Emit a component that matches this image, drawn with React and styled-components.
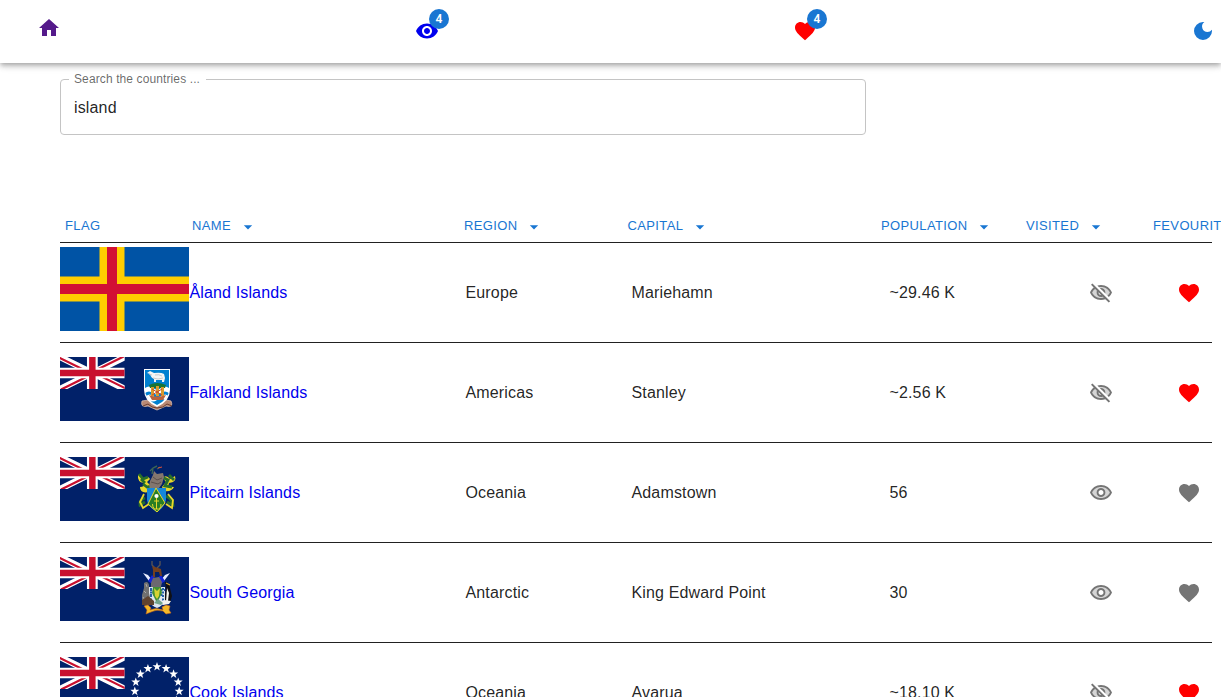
import React from 'react';
import styled, { createGlobalStyle } from 'styled-components';
import { MdHome, MdVisibility, MdFavorite, MdDarkMode, MdArrowDropDown } from 'react-icons/md';

const GlobalStyle = createGlobalStyle`
  *, *::before, *::after { box-sizing: border-box; }
  html, body { margin: 0; height: 100%; overflow: hidden; }
  body {
    background: #fff;
    color: rgba(0, 0, 0, 0.87);
    font: 400 16px/24px "Liberation Sans", Arial, sans-serif;
    letter-spacing: 0.15px;
  }
`;

const Page = styled.div`
  height: 100vh;
  overflow: hidden;
`;

const AppBar = styled.header`
  display: grid;
  grid-template-columns: 378px 378px 398px 24px;
  height: 63px;
  padding: 0 6px 0 37px;
  position: relative;
  background: #fff;
  box-shadow: 0 2px 4px -1px rgba(0, 0, 0, 0.2), 0 4px 5px 0 rgba(0, 0, 0, 0.14),
    0 1px 10px 0 rgba(0, 0, 0, 0.12);
`;

const NavItem = styled.a`
  position: relative;
  width: 24px;
  height: 24px;
  margin-top: ${(p) => p.$top || 19}px;
  color: ${(p) => p.$color};
  font-size: 24px;
  svg { display: block; }
`;

const Badge = styled.span`
  position: absolute;
  top: -10px;
  right: -10px;
  width: 20px;
  height: 20px;
  border-radius: 10px;
  background: #1976d2;
  color: #fff;
  font: 500 12px/20px Roboto, "Liberation Sans", sans-serif;
  font-weight: 600;
  letter-spacing: 0;
  text-align: center;
`;

const Main = styled.main`
  padding: 11px 9px 0 60px;
`;

const SearchField = styled.fieldset`
  width: 806px;
  height: 61px;
  margin: 0;
  padding: 0 8px;
  min-width: 0;
  border: 1px solid #c4c4c4;
  border-radius: 4px;
`;

const SearchLabel = styled.legend`
  height: 11px;
  padding: 0 6px 0 5px;
  color: rgba(0, 0, 0, 0.6);
  font-size: 12px;
  line-height: 11px;
  letter-spacing: 0.11px;
`;

const SearchInput = styled.input`
  display: block;
  width: 100%;
  height: 24px;
  margin-top: 11px;
  padding: 0 5px;
  border: 0;
  outline: 0;
  background: transparent;
  color: inherit;
  font: inherit;
  letter-spacing: inherit;
`;

const Table = styled.section`
  margin-top: 73px;
`;

const HeaderRow = styled.div`
  display: grid;
  grid-template-columns: 127px 272px 163.5px 253.5px 145px 127px 100px;
  height: 35px;
  border-bottom: 1px solid #212121;
`;

const SortButton = styled.button`
  display: flex;
  align-items: flex-start;
  padding: 6px 5px;
  border: 0;
  background: none;
  color: #1976d2;
  font: 13px/23px "Liberation Sans", Arial, sans-serif;
  letter-spacing: 0.37px;
  text-transform: uppercase;
  white-space: nowrap;
  svg { flex: none; margin: 3px 0 0 6.6px; font-size: 20px; }
`;

const Row = styled.div`
  display: grid;
  grid-template-columns: 129.4px 276.1px 166px 258px 199.5px 88px 35px;
  align-items: center;
  height: 100px;
  border-bottom: 1px solid #212121;
`;

const FlagCell = styled.div`
  padding-bottom: 7px;
  svg { display: block; }
  > svg { width: 129px; height: auto; }
`;

const CountryLink = styled.a`
  color: #0000ee;
  text-decoration: none;
`;

const IconCell = styled.span`
  display: flex;
  color: ${(p) => (p.$active ? '#ff0000' : '#757575')};
  font-size: 24px;
`;

function EyeTwoTone() {
  return (
    <svg width="24" height="24" viewBox="0 0 24 24" fill="currentColor">
      <path opacity=".3" d="M12 6c-3.79 0-7.17 2.13-8.82 5.5C4.83 14.87 8.21 17 12 17s7.17-2.13 8.82-5.5C19.17 8.13 15.79 6 12 6zm0 10c-2.48 0-4.5-2.02-4.5-4.5S9.52 7 12 7s4.5 2.02 4.5 4.5S14.48 16 12 16z" />
      <path d="M12 4C7 4 2.73 7.11 1 11.5 2.73 15.89 7 19 12 19s9.27-3.11 11-7.5C21.27 7.11 17 4 12 4zm0 13c-3.79 0-7.17-2.13-8.82-5.5C4.83 8.13 8.21 6 12 6s7.17 2.13 8.82 5.5C19.17 14.87 15.79 17 12 17zm0-10c-2.48 0-4.5 2.02-4.5 4.5S9.52 16 12 16s4.5-2.02 4.5-4.5S14.48 7 12 7zm0 7c-1.38 0-2.5-1.12-2.5-2.5S10.62 9 12 9s2.5 1.12 2.5 2.5S13.38 14 12 14z" />
    </svg>
  );
}

function EyeOffTwoTone() {
  return (
    <svg width="24" height="24" viewBox="0 0 24 24" fill="currentColor">
      <path opacity=".3" d="M12 6c-.68 0-1.34.09-1.99.22l.92.92c.35-.09.7-.14 1.07-.14 2.48 0 4.5 2.02 4.5 4.5 0 .37-.06.72-.14 1.07l2.05 2.05c.98-.86 1.81-1.91 2.4-3.12C19.17 8.13 15.79 6 12 6zm2.28 4.49c-.25-.57-.71-1.03-1.28-1.28zM12 17c.95 0 1.87-.13 2.75-.39l-.98-.98c-.54.24-1.14.37-1.77.37-2.48 0-4.5-2.02-4.5-4.5 0-.63.13-1.23.36-1.77L6.11 7.97C4.9 8.88 3.88 10.07 3.18 11.5 4.83 14.87 8.21 17 12 17z" />
      <path d="M12 6c3.79 0 7.17 2.13 8.82 5.5-.59 1.22-1.42 2.27-2.41 3.12l1.41 1.41c1.39-1.23 2.49-2.77 3.18-4.53C21.27 7.11 17 4 12 4c-1.27 0-2.49.2-3.64.57l1.65 1.65C10.66 6.09 11.32 6 12 6zm-1.07 1.14L13 9.21c.57.25 1.03.71 1.28 1.28l2.07 2.07c.08-.34.14-.7.14-1.07C16.5 9.01 14.48 7 12 7c-.37 0-.72.05-1.07.14zM2.01 3.87l2.68 2.68C3.06 7.83 1.77 9.53 1 11.5 2.73 15.89 7 19 12 19c1.52 0 2.98-.29 4.32-.82l3.42 3.42 1.41-1.41L3.42 2.45 2.01 3.87zm7.5 7.5l2.61 2.61c-.04.01-.08.02-.12.02-1.38 0-2.5-1.12-2.5-2.5 0-.05.01-.08.01-.13zm-3.4-3.4l1.75 1.75c-.23.55-.36 1.15-.36 1.78 0 2.48 2.02 4.5 4.5 4.5.63 0 1.23-.13 1.77-.36l.98.98c-.88.24-1.8.38-2.75.38-3.79 0-7.17-2.13-8.82-5.5.7-1.43 1.72-2.61 2.93-3.53z" />
    </svg>
  );
}

function AlandFlag() {
  return (
    <svg viewBox="0 0 129 84">
      <rect width="129" height="84" fill="#0053a5" />
      <path d="M39.5 0H64.5V84H39.5zM0 29.5H129V54.5H0z" fill="#ffce00" />
      <path d="M47 0H57V84H47zM0 37H129V47H0z" fill="#d21034" />
    </svg>
  );
}

function Ensign({ children }) {
  return (
    <svg viewBox="0 0 129 64">
      <rect width="129" height="64" fill="#012169" />
      <svg width="64.7" height="32" viewBox="0 0 60 30" preserveAspectRatio="none">
        <path d="M0 0L60 30M60 0L0 30" stroke="#fff" strokeWidth="6" />
        <path d="M-1 .5L30 16M30 14L59 -.5M61 29.5L30 14M30 16L1 30.5" stroke="#c8102e" strokeWidth="2" />
        <path d="M30 0V30M0 15H60" stroke="#fff" strokeWidth="10" />
        <path d="M30 0V30M0 15H60" stroke="#c8102e" strokeWidth="6" />
      </svg>
      {children}
    </svg>
  );
}

function FalklandCrest() {
  return (
    <g>
      <path d="M82 44Q80 51 88 49L97 53L106 49Q114 51 111 44L106 43Q97 50 88 43Z" fill="#b98974" stroke="#d8bcae" strokeWidth=".8" />
      <path d="M83 49l5-2 4 3 5 1 6-1 4-3 5 2" fill="none" stroke="#6d3e31" strokeWidth="1" />
      <path d="M84 12H110V33Q110 44 97 50Q84 44 84 33Z" fill="#fff" />
      <path d="M85 13H109V33Q109 42 97 48Q85 42 85 33Z" fill="#0080d0" />
      <path d="M85 31q4-3 8 0t8 0 8 0v5q-4-3-8 0t-8 0-8 0zM86 39q4-3 7 0t8 0 7 0l-3 4q-4-3-8 0t-8 0z" fill="#fff" />
      <path d="M89 28q8-4 17 0l-1 3H90z" fill="#167437" />
      <path d="M91 30h3v9h-3zM96 29h3v10h-3zM101 30h3v9h-3z" fill="#d99b2e" />
      <path d="M92 32l10 6M102 32l-10 6" stroke="#c54b2f" strokeWidth="1" />
      <path d="M89 38q8 3 17 0l-3 5H92z" fill="#b7633d" />
      <path d="M87 16l3-2 4 2q7-1 10 1l1 4-1 4h-2v-2h-6v2h-2v-3q-3-1-4-5z" fill="#f4f4f4" />
      <path d="M93 21q5 2 10 0M89 17l3 1M95 18q4-1 7 1" fill="none" stroke="#c9c9c9" strokeWidth="1" />
    </g>
  );
}

function PitcairnCrest() {
  return (
    <g>
      <path d="M89 35Q80 37 80 30Q85 30 84 26Q77 25 78 18L83 22Q88 18 90 22L87 25L92 30Z" fill="#e9d72b" />
      <path d="M104 34Q112 35 114 30Q107 30 109 26Q117 25 115 19L110 22Q106 17 103 21L106 25L102 30Z" fill="#e9d72b" />
      <path d="M79 17l4 5 5-2M83 27l4 3 4-1M81 22l4 4M102 20l6 3-3 6 7 1M109 18l5 5M85 41q-6 2-5 7l5-3M106 39q7 4 7 9l-6-3" fill="none" stroke="#286f2a" strokeWidth="2.8" />
      <path d="M84 37l-4 8 3 6 6-4M108 37l5 6-1 8-6-4" fill="none" stroke="#e9d72b" strokeWidth="1.8" />
      <path d="M90 24l3-6 1-4 3 3 6-1 1 4-2 7-3 4-7 1-3-3z" fill="#84766e" />
      <path d="M93 20l4 3 5-2M91 25l7 2 3-2" fill="none" stroke="#5c504c" strokeWidth="1" />
      <path d="M90 14l3-3 4-2M92 17l1-5M97 12l3-2" fill="none" stroke="#3b6554" strokeWidth="1.4" />
      <path d="M98 11l4-1" stroke="#d9503c" strokeWidth="1" />
      <path d="M87 31H106V43Q104 51 97 55Q88 50 87 43Z" fill="#1687d9" />
      <path d="M96 31L88 47L97 55L105 46Z" fill="#287e25" stroke="#e9d72b" strokeWidth="1" />
      <circle cx="96.5" cy="39" r="2.1" fill="#fff" />
      <path d="M96.5 41V52M92.5 47Q93 53 96.5 52Q101 53 101 47M94 44h5" fill="none" stroke="#e9d72b" strokeWidth="1" />
    </g>
  );
}

function SouthGeorgiaCrest() {
  return (
    <g>
      <path d="M83 16l5 2 4 5-3 1zM110 16l-5 2-4 5 3 1z" fill="#e8edff" />
      <path d="M88 24l4-6 4 4 5-4 4 6-4 3H92z" fill="#1624d7" />
      <path d="M92 4v4l3 3M100 4v4l-3 3" fill="none" stroke="#565356" strokeWidth="1.4" />
      <path d="M92 9l3 1 6 2 1 7h-2l-1-4h-4v5h-2v-7z" fill="#74401f" />
      <path d="M91 26l2-5 6-1 3 5-1 5H91z" fill="#6c6870" />
      <path d="M89 30H105V43Q103 49 97 51Q90 48 89 43Z" fill="#dfe6ef" />
      <path d="M90 33h15M90 38h14M91 31v14M103 31v13" stroke="#2460a8" strokeWidth="2" strokeDasharray="2 1.5" />
      <path d="M93 30h8l1 6-5 10-5-10z" fill="#429037" />
      <path d="M94 31l3 3 3-3-1 8-2 3-2-3z" fill="#d5d334" />
      <path d="M84 26q4-3 5 2v8l2 9-4 4-5-2v-9l2-7z" fill="#707070" />
      <path d="M86 27l1 3M84 34l2 2M83 40l3 5" stroke="#aaa" strokeWidth="1" />
      <path d="M105 25q4-1 5 6l2 8-2 7-5 1v-9l1-7z" fill="#101014" />
      <path d="M107 31l2 5-1 8-2 1z" fill="#f5f5ed" />
      <path d="M106 26l4 2" stroke="#d6a735" strokeWidth="1.2" />
      <path d="M82 43l6-4 6 5v4H82z" fill="#60432f" />
      <path d="M100 46l4-3 7 1-2 3-6 1z" fill="#f2f2ee" />
      <path d="M94 46l4-4 5 4-2 2z" fill="#72a48c" />
      <path d="M84 49l4-1 3 3-1 2q6-3 13 0l-1-3 4-2 4 1-1 4 2 3-5 1-3-3q-7-2-12 1l-5 2 1-4z" fill="#f5b927" stroke="#c46519" strokeWidth=".6" />
    </g>
  );
}

function CookStars() {
  const stars = Array.from({ length: 15 }, (_, i) => (i * 360) / 15);
  return (
    <g fill="#fff">
      {stars.map((a) => (
        <path
          key={a}
          d="M0-4L.95-1.3H3.8L1.5.5L2.35 3.25L0 1.6L-2.35 3.25L-1.5.5L-3.8-1.3H-.95Z"
          transform={`translate(${97 + 22.3 * Math.sin((a * Math.PI) / 180)} ${32 - 22.3 * Math.cos((a * Math.PI) / 180)}) scale(1.18)`}
        />
      ))}
    </g>
  );
}

const columns = ['Flag', 'Name', 'Region', 'Capital', 'Population', 'Visited', 'Fevourite'];

const countries = [
  { name: 'Åland Islands', region: 'Europe', capital: 'Mariehamn', population: '~29.46 K', visited: true, favourite: true, flag: <AlandFlag /> },
  { name: 'Falkland Islands', region: 'Americas', capital: 'Stanley', population: '~2.56 K', visited: true, favourite: true, flag: <Ensign><FalklandCrest /></Ensign> },
  { name: 'Pitcairn Islands', region: 'Oceania', capital: 'Adamstown', population: '56', flag: <Ensign><PitcairnCrest /></Ensign> },
  { name: 'South Georgia', region: 'Antarctic', capital: 'King Edward Point', population: '30', flag: <Ensign><SouthGeorgiaCrest /></Ensign> },
  { name: 'Cook Islands', region: 'Oceania', capital: 'Avarua', population: '~18.10 K', visited: true, favourite: true, flag: <Ensign><CookStars /></Ensign> },
];

export default function App() {
  return (
    <Page>
      <GlobalStyle />
      <AppBar>
        <NavItem $color="#551a8b" $top={16}><MdHome /></NavItem>
        <NavItem $color="#0000ee"><MdVisibility /><Badge>4</Badge></NavItem>
        <NavItem $color="#ff0000"><MdFavorite /><Badge>4</Badge></NavItem>
        <NavItem $color="#1976d2"><MdDarkMode /></NavItem>
      </AppBar>
      <Main>
        <SearchField>
          <SearchLabel>Search the countries ...</SearchLabel>
          <SearchInput defaultValue="island" />
        </SearchField>
        <Table>
          <HeaderRow>
            {columns.map((label, i) => (
              <SortButton key={label}>
                {label}
                {i > 0 && <MdArrowDropDown />}
              </SortButton>
            ))}
          </HeaderRow>
          {countries.map((c) => (
            <Row key={c.name}>
              <FlagCell>{c.flag}</FlagCell>
              <CountryLink>{c.name}</CountryLink>
              <span>{c.region}</span>
              <span>{c.capital}</span>
              <span>{c.population}</span>
              <IconCell>{c.visited ? <EyeOffTwoTone /> : <EyeTwoTone />}</IconCell>
              <IconCell $active={c.favourite}><MdFavorite /></IconCell>
            </Row>
          ))}
        </Table>
      </Main>
    </Page>
  );
}
